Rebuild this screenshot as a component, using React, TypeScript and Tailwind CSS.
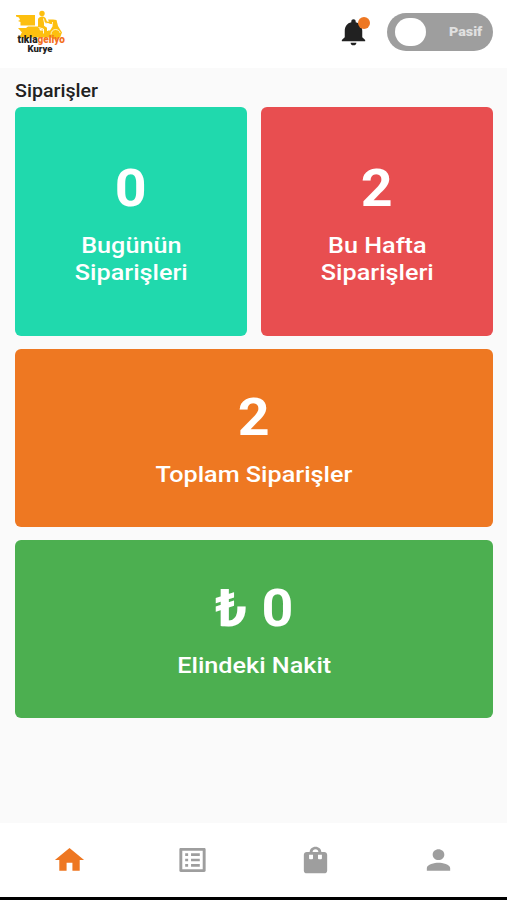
import type { ReactNode } from "react";

interface StatCardProps {
  value: string;
  label: ReactNode;
  className: string;
}

function Icon({ d, className }: { d: string; className: string }) {
  return (
    <svg viewBox="0 0 24 24" preserveAspectRatio="none" fill="currentColor" className={className}>
      <path d={d} />
    </svg>
  );
}

const icons = {
  bell: "M12 22c1.1 0 2-.9 2-2h-4c0 1.1.89 2 2 2zm6-6v-5c0-3.07-1.64-5.64-4.5-6.32V4c0-.83-.67-1.5-1.5-1.5s-1.5.67-1.5 1.5v.68C7.63 5.36 6 7.92 6 11v5l-2 2v1h16v-1l-2-2z",
  home: "M10 20v-6h4v6h5v-8h3L12 3 2 12h3v8z",
  orders:
    "M19 5v14H5V5h14m1.1-2H3.9c-.5 0-.9.4-.9.9v16.2c0 .4.4.9.9.9h16.2c.4 0 .9-.5.9-.9V3.9c0-.5-.5-.9-.9-.9zM11 7h6v2h-6V7zm0 4h6v2h-6v-2zm0 4h6v2h-6zM7 7h2v2H7zm0 4h2v2H7zm0 4h2v2H7z",
  bag: "M18 6h-2c0-2.21-1.79-4-4-4S8 3.79 8 6H6c-1.1 0-2 .9-2 2v12c0 1.1.9 2 2 2h12c1.1 0 2-.9 2-2V8c0-1.1-.9-2-2-2zM10.300 8v2.600c0 .5-.4.900-.9.900h-.9c-.5 0-.9-.4-.9-.9V8h2.700zm1.700-4c1.1 0 2 .9 2 2h-4c0-1.1.9-2 2-2zm4.400 4v2.600c0 .5-.4.900-.9.900h-.9c-.5 0-.9-.4-.9-.9V8h2.700z",
  person:
    "M12 12c2.21 0 4-1.79 4-4s-1.79-4-4-4-4 1.79-4 4 1.79 4 4 4zm0 2c-2.67 0-8 1.34-8 4v2h16v-2c0-2.66-5.33-4-8-4z",
};

const tabs = [
  { name: "home", color: "text-[#ee7722]" },
  { name: "orders", color: "text-[#9e9e9e]" },
  { name: "bag", color: "text-[#9e9e9e]" },
  { name: "person", color: "text-[#9e9e9e]" },
] as const;

function Logo() {
  return (
    <svg width="54" height="46" viewBox="0 0 54 46" className="shrink-0">
      {/* Courier on a scooter */}
      <g fill="#fdbf0f">
        <path d="M1 5h19v10.500H5.500V12L3 11l2-1-1-2.500-3-1z" />
        <path d="M3 18h8l2-1.500h10.500l1.500 4h10l2.500-4 .500-7 3.500.500 1.500 6 4 6.500-2 5H4l3-5z" />
        <path d="M23 9c1-3 6-3.500 7.500-1l1.500 3.500 5 .500v2l-6-.300-2-2v4l3 2V26h-3.500v-6L23 18z" />
        <circle cx="27" cy="3.500" r="2.700" />
        <path d="M33 9.500h5v2.500h-4z" />
        <circle cx="11" cy="24.500" r="4.500" />
        <circle cx="40.500" cy="24.500" r="5" />
      </g>
      <path d="M28.500 8.500l1 4.500 5 .800M23.500 17.500l5 1.500v4.500M32.500 15v6" stroke="#fff" strokeWidth="0.9" fill="none" />
      <path d="M36 24.500c0-3 2-5 4.500-5s4 1.500 4.700 3.500" stroke="#fff" strokeWidth="0.8" fill="none" />
      <g fontFamily="Roboto, sans-serif" fontWeight="900">
        <text x="2.500" y="33" fontSize="10" textLength="20" lengthAdjust="spacingAndGlyphs" fill="#222">tıkla</text>
        <text x="22.500" y="33" fontSize="10" textLength="27.500" lengthAdjust="spacingAndGlyphs" fill="#f37021">geliyo</text>
        <text x="12.500" y="41.500" fontSize="8.500" textLength="25" lengthAdjust="spacingAndGlyphs" fill="#222">Kurye</text>
      </g>
    </svg>
  );
}

function StatCard({ value, label, className }: StatCardProps) {
  return (
    <div className={`flex flex-col items-center rounded-md text-center text-white ${className}`}>
      <div className="scale-x-[1.09] text-[51px] font-bold leading-[60px]">{value}</div>
      <div className="mt-[13px] scale-x-[1.145] text-[22px] font-medium leading-[27px]">{label}</div>
    </div>
  );
}

export default function App() {
  return (
    <div className="flex h-[900px] w-[507px] flex-col overflow-hidden bg-[#fafafa] font-[Roboto,sans-serif]">
      <header className="flex h-[68px] shrink-0 items-start bg-white pl-[15px] pr-[14px] pt-[10px]">
        <Logo />
        <div className="relative ml-auto mr-[16px] mt-[6px]">
          <Icon d={icons.bell} className="h-[32px] w-[35px] text-[#212121]" />
          <span className="absolute right-[1px] top-[1px] size-[12px] rounded-full bg-[#ee7722]" />
        </div>
        <div className="mt-[3px] flex h-[38px] w-[106px] items-center justify-between rounded-full bg-[#9e9e9e] pl-[8px] pr-[11px]">
          <span className="h-[28px] w-[31px] rounded-full bg-white" />
          <span className="origin-right scale-x-[1.1] text-[13px] font-black text-[#e0e0e0]">Pasif</span>
        </div>
      </header>

      <main className="flex-1 px-[15px] pr-[14px] pt-[12px]">
        <h1 className="mb-[5px] origin-left scale-x-[1.09] text-[18px] font-medium leading-[22px] text-[#212121]">
          Siparişler
        </h1>
        <div className="grid grid-cols-2 gap-x-[14px] gap-y-[13px]">
          <StatCard value="0" label={<>Bugünün<br />Siparişleri</>} className="h-[229px] bg-[#20d9ad] pt-[52px]" />
          <StatCard value="2" label={<>Bu Hafta<br />Siparişleri</>} className="h-[229px] bg-[#e84e50] pt-[52px]" />
          <StatCard value="2" label="Toplam Siparişler" className="col-span-2 h-[178px] bg-[#ee7822] pt-[39px]" />
          <StatCard value="₺ 0" label="Elindeki Nakit" className="col-span-2 h-[178px] bg-[#4caf50] pt-[39px]" />
        </div>
      </main>

      <nav className="flex h-[77px] shrink-0 items-center border-b-[3px] border-black bg-white pl-[8px] pr-[7px]">
        {tabs.map((tab) => (
          <button key={tab.name} className="flex flex-1 justify-center">
            <Icon d={icons[tab.name]} className={`h-[32px] w-[35px] ${tab.color}`} />
          </button>
        ))}
      </nav>
    </div>
  );
}
